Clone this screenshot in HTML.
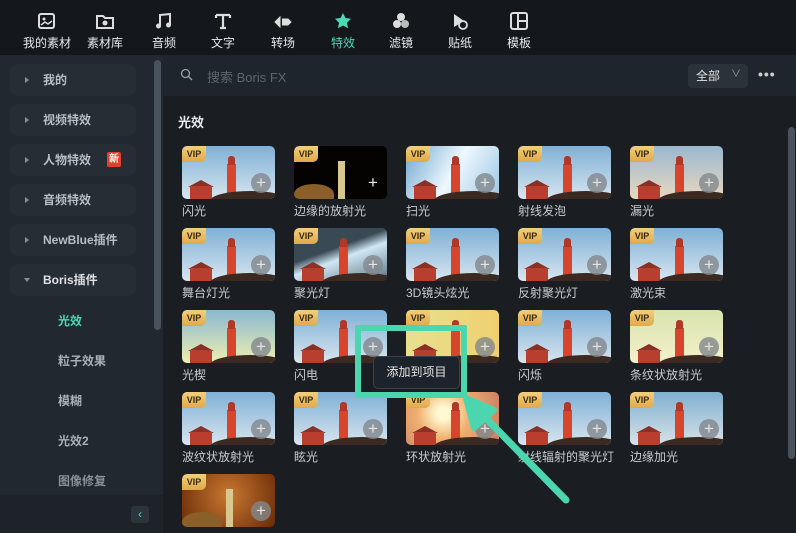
<!DOCTYPE html>
<html><head><meta charset="utf-8"><style>
*{margin:0;padding:0;box-sizing:border-box}
body{width:796px;height:533px;overflow:hidden;background:#1a1d21;font-family:"Liberation Sans","Noto Sans CJK SC",sans-serif;position:relative;color:#c8ccd2}
.top{position:absolute;left:0;top:0;width:796px;height:55px;background:#14181d}
.tb{position:absolute;top:10px;width:60px;text-align:center;font-size:12px;color:#e6e8ea}
.tb svg{display:block;margin:0 auto 2px;width:22px;height:22px}
.side{position:absolute;left:0;top:55px;width:163px;height:478px;background:#212830}
.it{position:absolute;left:10px;width:126px;height:32px;background:#272d35;border-radius:8px;font-size:12px;color:#b8bec6;font-weight:bold;line-height:32px;padding-left:33px}
.it:before{content:"";position:absolute;left:15px;top:13px;border-left:4px solid #8a9098;border-top:3px solid transparent;border-bottom:3px solid transparent}
.it.open:before{left:14px;top:14px;border-top:4px solid #8a9098;border-left:3px solid transparent;border-right:3px solid transparent;border-bottom:0}
.sub{position:absolute;left:58px;font-size:12px;color:#aab0b8;font-weight:bold}
.search{position:absolute;left:163px;top:55px;width:633px;height:41px;background:#1f252c}
.th{position:absolute;width:93px;height:53px;border-radius:5px;overflow:hidden;background:linear-gradient(180deg,#7fb0d6,#d8e6ee)}
.th .lh{position:absolute;left:45px;top:18px;width:9px;height:30px;background:#d6452c}
.th .lt{position:absolute;left:46px;top:10px;width:7px;height:9px;background:#b03828;border-radius:3px 3px 0 0}
.th .hs{position:absolute;left:8px;top:40px;width:22px;height:13px;background:#b83e2e}
.th .hr{position:absolute;left:6px;top:34px;border-bottom:7px solid #8a3026;border-left:13px solid transparent;border-right:13px solid transparent;width:0}
.th .gd{position:absolute;left:28px;top:45px;width:80px;height:20px;background:#3a2a22;border-radius:50% 50% 0 0}
.vip{position:absolute;left:0;top:0;width:24px;height:16px;background:linear-gradient(#f3cf7a,#e0a94a);border-radius:5px 0 5px 0;font-size:9px;font-weight:bold;color:#3a2a10;text-align:center;line-height:16px}
.pl{position:absolute;right:4px;bottom:6px;width:20px;height:20px;border-radius:50%;background:rgba(130,135,140,.8);color:#e6e6e6;font-size:17px;line-height:19px;text-align:center}
.lb{position:absolute;font-size:12px;color:#c8ccd2;white-space:nowrap}
</style></head><body>
<div class="top"></div>
<div class="tb" style="left:17px"><svg viewBox="0 0 22 22"><rect x="3" y="4" width="15" height="14" rx="2" fill="none" stroke="#ddd" stroke-width="2"/><circle cx="8" cy="9" r="1.5" fill="#ddd"/><path d="M5 15l4-3 3 2 4-3" stroke="#ddd" stroke-width="1.5" fill="none"/></svg>我的素材</div>
<div class="tb" style="left:75px"><svg viewBox="0 0 22 22"><path d="M3 6h6l2 2h8v10H3z" fill="none" stroke="#ddd" stroke-width="2"/><circle cx="11" cy="13" r="2.5" fill="#ddd"/></svg>素材库</div>
<div class="tb" style="left:134px"><svg viewBox="0 0 22 22"><path d="M7 16V5l10-1v11" stroke="#ddd" stroke-width="2" fill="none"/><circle cx="5.5" cy="16" r="2.5" fill="#ddd"/><circle cx="15.5" cy="15" r="2.5" fill="#ddd"/></svg>音频</div>
<div class="tb" style="left:193px"><svg viewBox="0 0 22 22"><path d="M4 5h14M11 5v13M4 5v3M18 5v3M8 18h6" stroke="#ddd" stroke-width="2.2" fill="none"/></svg>文字</div>
<div class="tb" style="left:253px"><svg viewBox="0 0 22 22"><path d="M3 12l5-5v10zM10 9h6l3 3-3 3h-6" fill="#ddd" stroke="#ddd" stroke-width="1"/></svg>转场</div>
<div class="tb" style="left:313px;color:#4fd6b2"><svg viewBox="0 0 22 22"><path d="M11 3l2.5 5 5.5.8-4 3.9 1 5.5-5-2.7-5 2.7 1-5.5-4-3.9 5.5-.8z" fill="#4fd6b2"/></svg>特效</div>
<div class="tb" style="left:371px"><svg viewBox="0 0 22 22"><circle cx="11" cy="7" r="4" fill="#ddd"/><circle cx="7" cy="14" r="4" fill="#ddd"/><circle cx="15" cy="14" r="4" fill="#bbb"/></svg>滤镜</div>
<div class="tb" style="left:430px"><svg viewBox="0 0 22 22"><path d="M5 4l10 7-10 6z" fill="#ddd"/><circle cx="14" cy="15" r="4" fill="none" stroke="#ddd" stroke-width="1.8"/></svg>贴纸</div>
<div class="tb" style="left:489px"><svg viewBox="0 0 22 22"><rect x="3" y="3" width="16" height="16" rx="2" fill="none" stroke="#ddd" stroke-width="2"/><path d="M10 3v16M10 11h9" stroke="#ddd" stroke-width="2"/></svg>模板</div>

<div class="side"></div>
<div class="it" style="top:64px">我的</div>
<div class="it" style="top:104px">视频特效</div>
<div class="it" style="top:144px">人物特效<span style="position:absolute;left:97px;top:8px;width:14px;height:15px;background:#e0402c;color:#fff;font-size:10px;line-height:15px;text-align:center;border-radius:2px">新</span></div>
<div class="it" style="top:184px">音频特效</div>
<div class="it" style="top:224px">NewBlue插件</div>
<div class="it open" style="top:264px;color:#dde1e5">Boris插件</div>
<div class="sub" style="top:312px;color:#4fd6b2">光效</div>
<div class="sub" style="top:352px">粒子效果</div>
<div class="sub" style="top:392px">模糊</div>
<div class="sub" style="top:432px">光效2</div>
<div class="sub" style="top:472px;color:#8a9098">图像修复</div>
<div style="position:absolute;left:0;top:495px;width:163px;height:38px;background:#1d2329"></div>
<div style="position:absolute;left:131px;top:506px;width:18px;height:17px;background:#2c343c;border-radius:3px;color:#4fd6b2;font-size:12px;text-align:center;line-height:17px">‹</div>
<div style="position:absolute;left:154px;top:60px;width:7px;height:270px;background:#4a525b;border-radius:4px"></div>

<div class="search"></div>
<svg style="position:absolute;left:180px;top:68px" width="13" height="13" viewBox="0 0 13 13"><circle cx="5.5" cy="5.5" r="4" fill="none" stroke="#9aa0a6" stroke-width="1.3"/><path d="M8.5 8.5l3.5 3.5" stroke="#9aa0a6" stroke-width="1.3"/></svg>
<div style="position:absolute;left:207px;top:67px;font-size:13px;color:#5e656d">搜索 Boris FX</div>
<div style="position:absolute;left:688px;top:64px;width:60px;height:24px;background:#2b323a;border-radius:4px;font-size:12px;color:#e0e3e6;line-height:24px;padding-left:8px">全部<span style="position:absolute;left:43px;top:-1px;color:#9aa0a6;font-size:10px">∨</span></div>
<div style="position:absolute;left:758px;top:66px;font-size:14px;color:#ccc;font-weight:bold;letter-spacing:1px">•••</div>
<div style="position:absolute;left:178px;top:112px;font-size:13px;font-weight:bold;color:#e8eaec">光效</div>
<div style="position:absolute;left:788px;top:127px;width:7px;height:332px;background:#4a525b;border-radius:4px"></div>

<div id="g"></div>
<script>
var items=[["闪光",""],["边缘的放射光","dark"],["扫光","bright"],["射线发泡",""],["漏光","warm"],
["舞台灯光",""],["聚光灯","spot"],["3D镜头炫光",""],["反射聚光灯",""],["激光束",""],
["光楔","lime"],["闪电",""],["","yellow"],["闪烁",""],["条纹状放射光","pale"],
["波纹状放射光",""],["眩光",""],["环状放射光","orange"],["射线辐射的聚光灯",""],["边缘加光","edge"],
["","brown"]];
var bg={dark:"#050302",bright:"linear-gradient(120deg,#6fa6cc,#eef8ff 50%,#9cc7e2)",warm:"linear-gradient(#9ab8d0,#e8d8c0)",spot:"linear-gradient(160deg,#3a4a55 40%,#cfe8f5 55%,#5a7080)",lime:"linear-gradient(#8ab8d0,#eef0b0)",yellow:"linear-gradient(90deg,#e8e090,#f0d070)",pale:"linear-gradient(#d8e4b0,#f4f0c8)",orange:"radial-gradient(circle at 40% 40%,#fff8d0 10%,#f0b070 40%,#c87a60)",edge:"linear-gradient(#80b0d0,#d8e2e8)",brown:"radial-gradient(circle at 50% 40%,#c87830,#6a2a08)"};
var h="";
items.forEach(function(it,i){var c=i%5,r=Math.floor(i/5),x=182+112*c,y=146+82*r;
var b=bg[it[1]]||"";var dk=it[1]=="dark"||it[1]=="brown";
h+='<div class="th" style="left:'+x+'px;top:'+y+'px;'+(b?'background:'+b:'')+'">';
if(dk){h+='<div class="lh" style="background:#d8c890;left:44px;top:15px;height:38px;width:7px"></div><div class="gd" style="left:0;top:38px;width:40px;background:#8a6028;border-radius:50% 50% 0 0"></div>';}
else h+='<div class="lh"></div><div class="lt"></div><div class="hr"></div><div class="hs"></div><div class="gd"></div>';
h+='<div class="vip">VIP</div><div class="pl"'+(it[1]=="dark"?' style="background:none;color:#eee"':'')+'>+</div></div>';
if(it[0])h+='<div class="lb" style="left:'+x+'px;top:'+(y+56)+'px">'+it[0]+'</div>';});
document.getElementById("g").innerHTML=h;
</script>
<div style="position:absolute;left:373px;top:356px;width:87px;height:33px;background:#1d232a;border:1px solid #3a424a;border-radius:5px;font-size:12px;color:#e6e8ea;text-align:center;line-height:31px">添加到项目</div>
<div style="position:absolute;left:355px;top:325px;width:112px;height:73px;border:6px solid #4cd6b0;border-radius:2px"></div>
<svg style="position:absolute;left:0;top:0" width="796" height="533"><path d="M566 500L474 406" stroke="#4cd6b0" stroke-width="7" stroke-linecap="round"/><path d="M466 398L474 428L494 410z" fill="#4cd6b0" stroke="#4cd6b0" stroke-width="6" stroke-linejoin="round"/></svg>
</body></html>
